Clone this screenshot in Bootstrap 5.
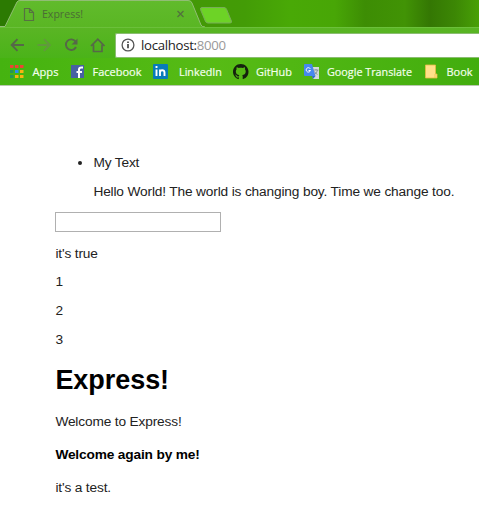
<!DOCTYPE html>
<html lang="en">
<head>
<meta charset="utf-8">
<meta name="viewport" content="width=device-width, initial-scale=1">
<title>Express!</title>
<link href="https://cdn.jsdelivr.net/npm/bootstrap@5.3.0/dist/css/bootstrap.min.css" rel="stylesheet">
<style>
body{font-family:"Liberation Sans",Arial,sans-serif;font-size:13.7px;letter-spacing:-.15px;line-height:16px;color:#222;background:#fff;overflow:hidden}
.chrome-ui{font-family:"Open Sans","Noto Sans",sans-serif;letter-spacing:0;height:86px;background:linear-gradient(90deg,#4db51b,#54ba1c 50%,#43ab12);border-bottom:1px solid #b9c7b0}
.tabstrip{height:27px;background:linear-gradient(90deg,#2c7a02 0,#2c7a02 20px,#439806 190px,#439c06 245px,#49a906 290px,#48a606 335px,#3d8d04 365px,#419305 405px,#347703 430px,#3c8705 455px,#48a006 479px)}
.tabstrip svg,.tools svg,.bookmarks svg{display:block;flex:none}
.tab-shape{width:240px;height:27px}
.tab-label{font-size:11.5px;fill:#4b6c35}
.tools{height:31px;padding:5px 0 1px 9px;border-top:1px solid #6bc03a;background:linear-gradient(#5ab524,#4bb319)}
.address{height:25px;font-size:13.2px;letter-spacing:-.3px;color:#222;border:1px solid #8bbd72;border-right:0;border-radius:2px 0 0 2px}
.url-text{margin-left:5px}
.port{color:#999}
.bookmarks{height:27px;padding-left:10px;font-size:11.5px;color:#f4ffed;background:linear-gradient(90deg,#45b310,#57bb15 45%,#42ad0e)}
.bookmarks text{stroke:currentColor;stroke-width:.2}
.bookmarks a{color:inherit;flex:none}
.w-apps{width:61px}.w-fb{width:82px}.w-in{width:80px}.w-gh{width:71px}.w-gt{width:121px}.w-book{width:54px}
.page{padding:69px 0 0 55.4px}
.page p,.page ul{margin-bottom:12.7px}
.page ul{padding-left:38px}
.page li p{margin:12.7px 0 0}
.text-box{width:166px;height:20px;border:1px solid #b0b0b0;margin-bottom:13.4px}
.page h1{font-size:27px;letter-spacing:-.05px;line-height:32px;font-weight:700;color:#000;margin:16px 0 18px}
.page .strong-line{color:#000;margin:17px 0}
</style>
</head>
<body>
<header class="chrome-ui">
  <div class="tabstrip">
    <svg class="tab-shape" viewBox="0 0 240 27">
      <defs><linearGradient id="tg" x2="0" y2="1"><stop stop-color="#61bb2c"/><stop offset="1" stop-color="#5ab624"/></linearGradient></defs>
      <path d="M0 27h5L17 2Q18 0 20 0H188Q191 0 192 3L201 25Q202 27 205 27Z" fill="url(#tg)"/>
      <path d="M0 26.500h5L17 2Q18 .5 20 .5H188Q191 .5 192 3L201 25Q202 27 205 27" fill="none" stroke="#91bd75"/>
      <path d="M202 7.500h22q2 0 2.700 2l4.700 11.500q.7 2-1.500 2H208q-2 0-2.700-2L200.500 9.500q-.5-2 1.500-2Z" fill="#6dd326" stroke="#78ad58"/>
      <path d="M24.500 8.500h5l4 4v8h-9zM29.500 8.500v4h4" fill="none" stroke="#567142" stroke-width="1.200"/>
      <text class="tab-label" x="42" y="18" textLength="41" lengthAdjust="spacingAndGlyphs">Express!</text>
      <path d="m177.500 11 6 6m0-6-6 6" stroke="#53723e" stroke-width="1.300"/>
    </svg>
  </div>
  <div class="tools d-flex align-items-center">
    <svg width="106" height="24" viewBox="0 0 106 24" fill="none" stroke="#566848" stroke-width="1.900">
      <path d="M15 12H3M8.500 6.200 2.700 12l5.800 5.800"/>
      <path d="M28.500 12H40M35 6.200l5.800 5.800-5.800 5.800" stroke="#61993d"/>
      <path d="M66.500 8.500A5.300 5.300 0 1 0 67 14"/><path d="M68.500 5.500v6h-6z" fill="#566848" stroke="none"/>
      <path d="m82 13 6.800-6.800L95.500 13M84.500 11.500V18.500h8.500v-7" stroke-width="1.700"/>
    </svg>
    <div class="address flex-grow-1 bg-white d-flex align-items-center">
      <svg class="ms-1" width="16" height="16" viewBox="0 0 16 16"><circle cx="8" cy="8" r="5.900" fill="none" stroke="#555" stroke-width="1.300"/><path d="M8 7v4.300M8 4.500v1.500" stroke="#444" stroke-width="1.700"/></svg>
      <span class="url-text">localhost:<span class="port">8000</span></span>
    </div>
  </div>
  <nav class="bookmarks d-flex align-items-center">
    <a class="w-apps">
      <svg width="61" height="24" viewBox="0 0 61 24">
        <path d="M0 5h3.500v3H0zM5 5h3.500v3H5zM10 5h3.500v3H10z" fill="#ee4335"/>
        <path d="M0 10h3.500v3H0zM0 15h3.500v3H0z" fill="#269657"/><path d="M5 10h3.500v3H5z" fill="#298ef0"/><path d="M10 10h3.500v3H10zM5 15h3.500v3H5zM10 15h3.500v3H10z" fill="#f8b312"/>
        <text x="22.500" y="16" textLength="26" lengthAdjust="spacingAndGlyphs" fill="currentColor">Apps</text>
      </svg>
    </a>
    <a class="w-fb">
      <svg width="82" height="24" viewBox="0 0 82 24">
        <path d="M0 5h13v13H0z" fill="#4861a3"/><path d="M12 7.500H10.500Q8 7.500 8 9.500V18M5.500 12H11" fill="none" stroke="#fff" stroke-width="2"/>
        <text x="21.500" y="16" textLength="49" lengthAdjust="spacingAndGlyphs" fill="currentColor">Facebook</text>
      </svg>
    </a>
    <a class="w-in">
      <svg width="80" height="24" viewBox="0 0 80 24">
        <rect y="4" width="15" height="15" rx="1" fill="#087bb9"/><path d="M3.500 9.500V16M3.500 6v2M7 9.500V16M7 12.500q0-2.200 2.200-2.200T11.500 12.500V16" fill="none" stroke="#fff" stroke-width="1.900"/>
        <text x="26" y="16" textLength="43" lengthAdjust="spacingAndGlyphs" fill="currentColor">LinkedIn</text>
      </svg>
    </a>
    <a class="w-gh">
      <svg width="71" height="24" viewBox="0 0 71 24">
        <path transform="translate(0 4) scale(.97)" fill="#15210e" d="M8 0C3.580 0 0 3.580 0 8c0 3.540 2.290 6.530 5.470 7.590.4.070.55-.17.55-.38 0-.19-.01-.82-.01-1.490-2.010.37-2.530-.49-2.690-.94-.09-.23-.48-.94-.82-1.130-.28-.15-.68-.52-.01-.53.63-.01 1.080.58 1.230.82.72 1.210 1.870.87 2.330.66.07-.52.28-.87.51-1.070-1.780-.2-3.640-.89-3.640-3.950 0-.87.31-1.590.82-2.150-.08-.2-.36-1.020.08-2.120 0 0 .67-.21 2.200.82.64-.18 1.320-.27 2-.27s1.360.09 2 .27c1.530-1.040 2.200-.82 2.200-.82.44 1.100.16 1.920.08 2.120.51.56.82 1.270.82 2.150 0 3.070-1.870 3.750-3.650 3.950.29.25.54.73.54 1.480 0 1.070-.01 1.930-.01 2.200 0 .21.15.46.55.38A8.010 8.010 0 0 0 16 8c0-4.420-3.580-8-8-8"/>
        <text x="23" y="16" textLength="36" lengthAdjust="spacingAndGlyphs" fill="currentColor">GitHub</text>
      </svg>
    </a>
    <a class="w-gt">
      <svg width="121" height="24" viewBox="0 0 121 24">
        <path d="M7 7h8v12H9z" fill="#d4dad9"/><path d="M1 4h7l3.500 12H1q-1 0-1-1V5q0-1 1-1Z" fill="#4688ee"/><path d="M8 16h3.500L9 19z" fill="#3168c8"/>
        <path d="M6.300 8.800A2.200 2.200 0 1 0 6.500 10.500H4.500" fill="none" stroke="#fff"/><path d="M9.500 10h5M12 9v1m1.500 0q-.5 3-3 4.500m0-3q1 2 3 3" fill="none" stroke="#7b8990" stroke-width=".8"/>
        <text x="23" y="16" textLength="85" lengthAdjust="spacingAndGlyphs" fill="currentColor">Google Translate</text>
      </svg>
    </a>
    <a class="w-book">
      <svg width="54" height="24" viewBox="0 0 54 24">
        <path d="M.5 5h10v9h1.500v4H.5z" fill="#ffe08a" stroke="#e7bd45" stroke-width=".8"/><path d="M10 14v4" stroke="#e7bd45" stroke-width=".7"/>
        <text x="21.500" y="16" textLength="26" lengthAdjust="spacingAndGlyphs" fill="currentColor">Book</text>
      </svg>
    </a>
  </nav>
</header>
<main class="page">
  <ul><li>My Text<p>Hello World! The world is changing boy. Time we change too.</p></li></ul>
  <input class="text-box d-block p-0 bg-white" type="text" aria-label="Text">
  <p>it's true</p>
  <p>1</p>
  <p>2</p>
  <p>3</p>
  <h1>Express!</h1>
  <p>Welcome to Express!</p>
  <p class="strong-line fw-bold">Welcome again by me!</p>
  <p>it's a test.</p>
</main>
<script src="https://cdn.jsdelivr.net/npm/bootstrap@5.3.0/dist/js/bootstrap.bundle.min.js"></script>
</body>
</html>
